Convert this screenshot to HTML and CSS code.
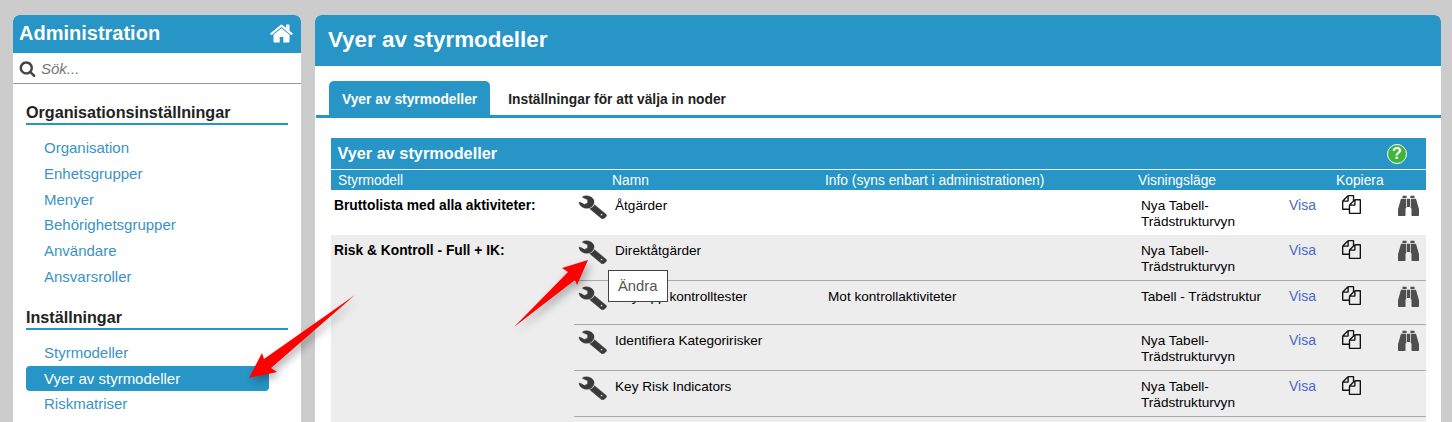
FILE: index.html
```html
<!DOCTYPE html>
<html lang="sv">
<head>
  <meta charset="UTF-8" />
  <title>Vyer av styrmodeller</title>
  <link rel="stylesheet" href="styles.css">
</head>
<body>
  <svg class="icon-defs" width="0" height="0">
    <defs>
      <symbol id="i-wrench" viewBox="0 0 1792 1792" preserveAspectRatio="none">
        <path transform="translate(1792 0) scale(-1 1)" d="M448 1472q0-26-19-45t-45-19-45 19-19 45 19 45 45 19 45-19 19-45zm644-420l-682 682q-37 37-90 37-52 0-91-37l-106-108q-38-36-38-90 0-53 38-91l681-681q39 98 114.5 173.5t173.5 114.5zm634-435q0 39-23 106-47 134-164.5 217.5t-258.5 83.5q-185 0-316.5-131.5t-131.5-316.5 131.5-316.5 316.5-131.5q58 0 121.5 16.5t107.5 46.5q16 11 16 28t-16 28l-293 169v224l193 107q5-3 79-48.5t135.5-81 70.5-35.5q15 0 23.5 10t8.5 25z"/>
      </symbol>
      <symbol id="i-copy" viewBox="0 0 1792 1792">
        <path d="M1696 384q40 0 68 28t28 68v1216q0 40-28 68t-68 28h-960q-40 0-68-28t-28-68v-288h-544q-40 0-68-28t-28-68v-672q0-40 20-88t48-76l408-408q28-28 76-48t88-20h416q40 0 68 28t28 68v328q68-40 128-40h416zm-544 213l-299 299h299v-299zm-640-384l-299 299h299v-299zm196 647l316-316v-416h-384v416q0 40-28 68t-68 28h-416v640h512v-256q0-40 20-88t48-76zm956 804v-1152h-384v416q0 40-28 68t-68 28h-416v640h896z"/>
      </symbol>
      <symbol id="i-binoculars" viewBox="0 0 1792 1792">
        <path d="M704 320v768q0 26-19 45t-45 19v576q0 26-19 45t-45 19h-512q-26 0-45-19t-19-45v-512l249-873q7-23 31-23h424zm320 0v704h-256v-704h256zm768 896v512q0 26-19 45t-45 19h-512q-26 0-45-19t-19-45v-576q-26 0-45-19t-19-45v-768h424q24 0 31 23zM736 96v160h-352v-160q0-14 9-23t23-9h288q14 0 23 9t9 23zm672 0v160h-352v-160q0-14 9-23t23-9h288q14 0 23 9t9 23z"/>
      </symbol>
    </defs>
  </svg>

  <aside class="sidebar">
    <div class="side-head">
      <span>Administration</span>
      <svg class="home-icon" viewBox="0 0 1792 1792"><path d="M1472 992v480q0 26-19 45t-45 19h-384v-384h-256v384h-384q-26 0-45-19t-19-45v-480q0-1 .5-3t.5-3l575-474 575 474q1 2 1 6zm223-69l-62 74q-8 9-21 11h-3q-13 0-21-7l-692-577-692 577q-12 8-24 7-13-2-21-11l-62-74q-8-10-7-23.5t11-21.5l719-599q32-26 76-26t76 26l244 204v-195q0-14 9-23t23-9h192q14 0 23 9t9 23v408l219 182q10 8 11 21.5t-7 23.5z"/></svg>
    </div>
    <div class="side-search">
      <svg class="search-icon" viewBox="0 0 1792 1792"><path d="M1216 832q0-185-131.5-316.5t-316.5-131.5-316.5 131.5-131.5 316.5 131.5 316.5 316.5 131.5 316.5-131.5 131.5-316.5zm512 832q0 52-38 90t-90 38q-54 0-90-38l-343-342q-179 124-399 124-143 0-273.5-55.5t-225-150-150-225-55.5-273.5 55.5-273.5 150-225 225-150 273.5-55.5 273.5 55.5 225 150 150 225 55.5 273.5q0 220-124 399l343 343q37 37 37 90z"/></svg>
      <span>Sök...</span>
    </div>
    <div class="side-body">
      <h3>Organisationsinställningar</h3>
      <ul class="side-nav">
        <li><a href="#">Organisation</a></li>
        <li><a href="#">Enhetsgrupper</a></li>
        <li><a href="#">Menyer</a></li>
        <li><a href="#">Behörighetsgrupper</a></li>
        <li><a href="#">Användare</a></li>
        <li><a href="#">Ansvarsroller</a></li>
      </ul>
      <h3>Inställningar</h3>
      <ul class="side-nav">
        <li><a href="#">Styrmodeller</a></li>
        <li class="active"><a href="#">Vyer av styrmodeller</a></li>
        <li><a href="#">Riskmatriser</a></li>
      </ul>
    </div>
  </aside>

  <main class="content">
    <h1>Vyer av styrmodeller</h1>
    <div class="tabs">
      <a href="#" class="tab active">Vyer av styrmodeller</a>
      <a href="#" class="tab">Inställningar för att välja in noder</a>
    </div>
    <section class="panel">
      <div class="panel-head">
        <span>Vyer av styrmodeller</span>
        <span class="help">?</span>
      </div>
      <table class="model-table">
        <colgroup>
          <col class="c-model"><col class="c-edit"><col class="c-name"><col class="c-info">
          <col class="c-mode"><col class="c-show"><col class="c-copy"><col class="c-find">
        </colgroup>
        <thead>
          <tr>
            <th class="th-model" colspan="2">Styrmodell</th>
            <th>Namn</th>
            <th>Info (syns enbart i administrationen)</th>
            <th colspan="2">Visningsläge</th>
            <th class="th-copy" colspan="2">Kopiera</th>
          </tr>
        </thead>
        <tbody>
          <tr class="plain">
            <td class="model">Bruttolista med alla aktiviteter:</td>
            <td class="edit"><svg class="wrench"><use href="#i-wrench"/></svg></td>
            <td>Åtgärder</td>
            <td></td>
            <td>Nya Tabell-<br>Trädstrukturvyn</td>
            <td class="show"><a href="#">Visa</a></td>
            <td class="copy"><svg class="copy-icon"><use href="#i-copy"/></svg></td>
            <td class="find"><svg class="find-icon"><use href="#i-binoculars"/></svg></td>
          </tr>
          <tr>
            <td class="model" rowspan="5">Risk &amp; Kontroll - Full + IK:</td>
            <td class="edit"><svg class="wrench"><use href="#i-wrench"/></svg></td>
            <td>Direktåtgärder</td>
            <td></td>
            <td>Nya Tabell-<br>Trädstrukturvyn</td>
            <td class="show"><a href="#">Visa</a></td>
            <td class="copy"><svg class="copy-icon"><use href="#i-copy"/></svg></td>
            <td class="find"><svg class="find-icon"><use href="#i-binoculars"/></svg></td>
          </tr>
          <tr class="short">
            <td class="edit"><svg class="wrench"><use href="#i-wrench"/></svg></td>
            <td>Key App kontrolltester</td>
            <td>Mot kontrollaktiviteter</td>
            <td>Tabell - Trädstruktur</td>
            <td class="show"><a href="#">Visa</a></td>
            <td class="copy"><svg class="copy-icon"><use href="#i-copy"/></svg></td>
            <td class="find"><svg class="find-icon"><use href="#i-binoculars"/></svg></td>
          </tr>
          <tr class="tall">
            <td class="edit"><svg class="wrench"><use href="#i-wrench"/></svg></td>
            <td>Identifiera Kategoririsker</td>
            <td></td>
            <td>Nya Tabell-<br>Trädstrukturvyn</td>
            <td class="show"><a href="#">Visa</a></td>
            <td class="copy"><svg class="copy-icon"><use href="#i-copy"/></svg></td>
            <td class="find"><svg class="find-icon"><use href="#i-binoculars"/></svg></td>
          </tr>
          <tr class="tall">
            <td class="edit"><svg class="wrench"><use href="#i-wrench"/></svg></td>
            <td>Key Risk Indicators</td>
            <td></td>
            <td>Nya Tabell-<br>Trädstrukturvyn</td>
            <td class="show"><a href="#">Visa</a></td>
            <td class="copy"><svg class="copy-icon"><use href="#i-copy"/></svg></td>
            <td class="find"></td>
          </tr>
          <tr class="cut">
            <td class="edit"></td>
            <td></td>
            <td></td>
            <td></td>
            <td class="show"></td>
            <td class="copy"><svg class="copy-icon"><use href="#i-copy"/></svg></td>
            <td class="find"><svg class="find-icon"><use href="#i-binoculars"/></svg></td>
          </tr>
        </tbody>
      </table>
    </section>
  </main>

  <div class="tooltip">Ändra</div>

  <svg class="arrows" width="1452" height="422" viewBox="0 0 1452 422">
    <polygon points="355,295 264,359 262,353 249,378 277,372 271,368"/>
    <polygon points="514,327 568,272 562,268 588,260 577,285 575,280"/>
  </svg>
</body>
</html>
```

FILE: styles.css
```css
html, body {
  margin: 0;
  padding: 0;
  height: 422px;
  overflow: hidden;
}
body {
  position: relative;
  display: flex;
  align-items: flex-start;
  gap: 14px;
  padding: 15px 11px 0 13px;
  box-sizing: border-box;
  background: #cccccc;
  font-family: "Liberation Sans", Arial, sans-serif;
  color: #000;
}
a { text-decoration: none; }
.icon-defs { position: absolute; }

/* sidebar */
.sidebar {
  width: 288px;
  flex: none;
  height: 407px;
  overflow: hidden;
  background: #fff;
  border-radius: 6px 6px 0 0;
}
.side-head {
  height: 36px;
  padding: 0 7px 2px 6px;
  display: flex;
  align-items: center;
  justify-content: space-between;
  background: #2795c6;
  color: #fff;
  font-size: 20px;
  font-weight: bold;
  border-radius: 6px 6px 0 0;
}
.home-icon { width: 25px; height: 25px; fill: #fff; }
.side-search {
  height: 30px;
  border-bottom: 1px solid #999;
  padding-left: 6px;
  display: flex;
  align-items: center;
  gap: 5px;
  color: #777;
  font-size: 15px;
  font-style: italic;
}
.search-icon { width: 17px; height: 17px; fill: #444; }
.side-body { padding: 19px 13px 0; }
.side-body h3 {
  margin: 0;
  padding-bottom: 2px;
  height: 18px;
  line-height: 18px;
  font-size: 16.15px;
  font-weight: bold;
  color: #222;
  border-bottom: 2px solid #2795c6;
}
.side-nav {
  list-style: none;
  margin: 10px 0 18px;
  padding: 0;
}
.side-nav li {
  height: 25.8px;
  line-height: 25.8px;
  padding-left: 18px;
  font-size: 15px;
}
.side-nav a { color: #3a93c4; }
.side-nav li.active {
  width: 225px;
  background: #2795c6;
  border-radius: 4px;
}
.side-nav li.active a { color: #fff; }

/* main */
.content {
  width: 1126px;
  flex: none;
  height: 407px;
  overflow: hidden;
  background: #fff;
  border-radius: 6px 6px 0 0;
}
.content h1 {
  margin: 0;
  height: 51px;
  line-height: 49px;
  padding-left: 13px;
  background: #2795c6;
  color: #fff;
  font-size: 22.4px;
  font-weight: bold;
  border-radius: 6px 6px 0 0;
}
.tabs {
  margin-top: 15px;
  margin-left: 1px;
  padding-left: 13px;
  height: 34px;
  display: flex;
  border-bottom: 3px solid #2795c6;
}
.tab {
  height: 34px;
  line-height: 37px;
  padding: 0 13px;
  margin-right: 5px;
  font-size: 13.8px;
  font-weight: bold;
  color: #222;
  border-radius: 5px 5px 0 0;
}
.tab.active { background: #2795c6; color: #fff; }

.panel { margin: 20px 15px 0 16px; }
.panel-head {
  height: 31px;
  padding: 0 19px 0 6.5px;
  display: flex;
  align-items: center;
  justify-content: space-between;
  background: #2795c6;
  color: #fff;
  font-size: 16.3px;
  font-weight: bold;
  border-bottom: 1px solid #fff;
}
.help {
  width: 18px;
  height: 18px;
  line-height: 18px;
  border: 1px solid #fff;
  border-radius: 50%;
  background: #3fb53a;
  color: #fff;
  font-size: 16px;
  font-weight: bold;
  text-align: center;
}

/* table */
.model-table {
  width: 1095px;
  border-collapse: collapse;
  table-layout: fixed;
  font-size: 13.6px;
}
.c-model { width: 243px; }
.c-edit { width: 38px; }
.c-name { width: 213px; }
.c-info { width: 313px; }
.c-mode { width: 147px; }
.c-show { width: 48px; }
.c-copy { width: 60px; }
.c-find { width: 33px; }
.model-table th {
  height: 20px;
  padding: 0;
  background: #2795c6;
  color: #fff;
  font-size: 13.8px;
  font-weight: normal;
  text-align: left;
}
.model-table .th-model { padding-left: 7px; }
.model-table .th-copy { padding-left: 3px; }
.model-table td {
  height: 45px;
  box-sizing: border-box;
  padding: 8px 3px 0;
  vertical-align: top;
  line-height: 16px;
  background: #ededed;
  border-bottom: 1px solid #aaa;
}
.model-table tr.plain td { background: #fff; border-bottom: none; }
.model-table tr.short td { height: 44px; }
.model-table tr.tall td { height: 46px; }
.model-table td.model {
  border-bottom: none;
  font-size: 13.8px;
  font-weight: bold;
  padding-top: 8px;
}
.model-table td.edit { padding: 4px 0 0 4px; }
.model-table td.show { padding: 7px 0 0 4px; font-size: 14px; }
.show a { color: #4a68c4; }
.model-table td.copy { padding: 5px 0 0 9px; }
.model-table td.find { padding: 5px 0 0 5px; }
.wrench { width: 30px; height: 25px; fill: #3a3a3a; stroke: #3a3a3a; stroke-width: 30; }
.copy-icon { width: 19px; height: 19px; fill: #111; }
.find-icon { width: 21px; height: 21px; fill: #4f4f4f; }

/* overlays */
.tooltip {
  position: absolute;
  left: 608px;
  top: 270px;
  width: 60px;
  height: 32px;
  line-height: 31px;
  box-sizing: border-box;
  border: 1px solid #444;
  background: #fff;
  padding-left: 9px;
  color: #555;
  font-size: 14.8px;
}
.arrows {
  position: absolute;
  left: 0;
  top: 0;
  fill: #ff0000;
  filter: drop-shadow(3px 4px 4px rgba(0, 0, 0, 0.3));
  pointer-events: none;
}
```
